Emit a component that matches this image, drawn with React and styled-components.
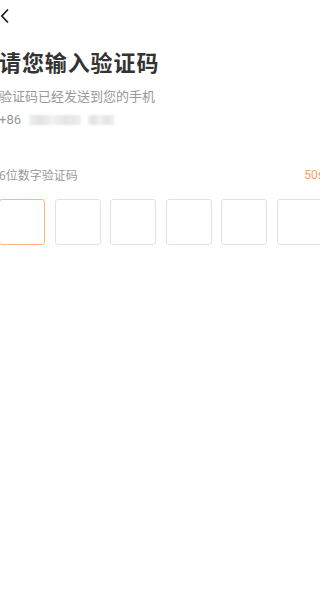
import React from 'react';
import styled, { createGlobalStyle } from 'styled-components';

const GlobalStyle = createGlobalStyle`
  html, body {
    margin: 0;
    padding: 0;
    background: #ffffff;
    overflow: hidden;
  }
  body {
    font-family: "Noto Sans CJK SC", "Noto Sans", sans-serif;
  }
`;

const Page = styled.div`
  width: 340px;
  height: 590px;
  margin-left: -1px;
  display: flex;
  flex-direction: column;
  background: #fff;
`;

const NavBar = styled.div`
  height: 32px;
  display: flex;
  align-items: center;
`;

const BackButton = styled.button`
  border: none;
  background: none;
  padding: 0 0 0 1px;
  margin-top: -1px;
  display: flex;
  align-items: center;
  cursor: pointer;
`;

const Title = styled.h1`
  margin: 13px 0 0;
  font-size: 22px;
  line-height: 32px;
  font-weight: 700;
  color: #333333;
  letter-spacing: 0.9px;
`;

const Hint = styled.p`
  margin: 9px 0 0;
  font-size: 13px;
  line-height: 20px;
  color: #999999;
`;

const PhoneRow = styled.div`
  display: flex;
  align-items: center;
  height: 22px;
  margin-top: 2px;
  font-family: "Roboto", "Noto Sans", sans-serif;
  font-size: 13px;
  color: #999999;
`;

const Masked = styled.span`
  display: inline-block;
  width: ${p => p.$w}px;
  height: 10px;
  margin-left: ${p => p.$gap}px;
  margin-top: 1px;
  background: linear-gradient(90deg, #f0f0f0 0%, #e2e2e2 20%, #f2f2f2 45%, #e4e4e4 70%, #efefef 100%);
  filter: blur(1.2px);
`;

const CodeHeader = styled.div`
  margin-top: 36px;
  display: flex;
  justify-content: space-between;
  align-items: center;
  padding-right: 15px;
  font-size: 12px;
  line-height: 18px;
  color: #999999;
`;

const Countdown = styled.span`
  color: #ff9d5c;
  font-family: "Roboto", "Noto Sans", sans-serif;
`;

const Boxes = styled.div`
  margin-top: 15px;
  display: flex;
  gap: 9.5px;
`;

const Box = styled.div`
  box-sizing: border-box;
  width: 46px;
  height: 46px;
  flex: none;
  border-radius: 3px;
  border: 1px solid ${p => (p.$active ? '#ffb486' : '#e3e3e3')};
  background: #fff;
`;

export default function App() {
  return (
    <>
      <GlobalStyle />
      <Page>
        <NavBar>
          <BackButton aria-label="返回">
            <svg width="10" height="16" viewBox="0 0 10 16">
              <path d="M8 1.5 L1.8 8 L8 14.5" fill="none" stroke="#111" strokeWidth="1.6" />
            </svg>
          </BackButton>
        </NavBar>
        <Title>请您输入验证码</Title>
        <Hint>验证码已经发送到您的手机</Hint>
        <PhoneRow>
          +86
          <Masked $w={52} $gap={8} />
          <Masked $w={26} $gap={7} />
        </PhoneRow>
        <CodeHeader>
          <span>6位数字验证码</span>
          <Countdown>50s</Countdown>
        </CodeHeader>
        <Boxes>
          {[0, 1, 2, 3, 4, 5].map(i => (
            <Box key={i} $active={i === 0} />
          ))}
        </Boxes>
      </Page>
    </>
  );
}
